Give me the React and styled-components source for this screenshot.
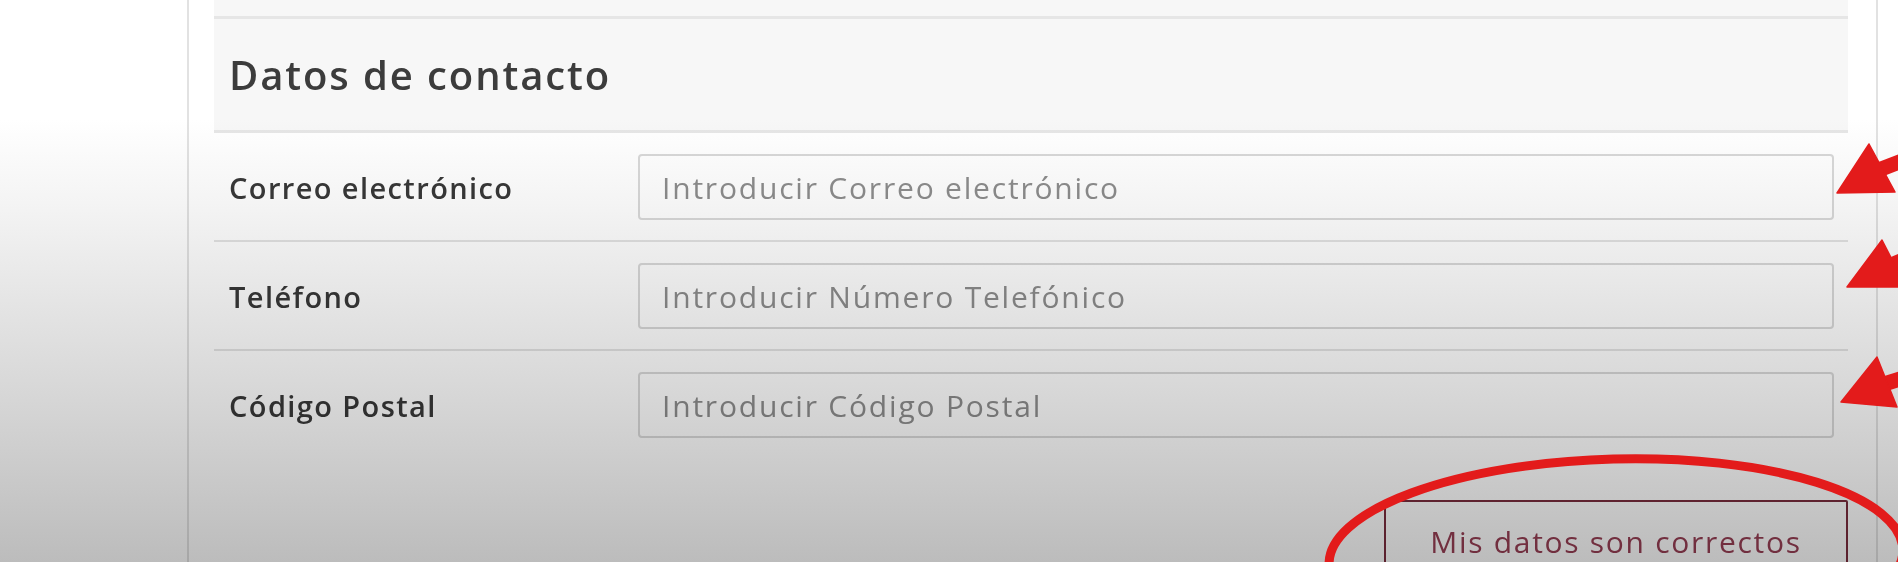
import React from "react";
import styled, { createGlobalStyle } from "styled-components";

const GlobalStyle = createGlobalStyle`
	html, body {
		margin: 0;
		padding: 0;
		background: #ffffff;
		overflow: hidden;
	}
	body {
		font-family: "Open Sans", "Noto Sans", "Liberation Sans", sans-serif;
	}
`;

const Page = styled.div`
	position: relative;
	width: 1898px;
	height: 562px;
	overflow: hidden;
	background: #ffffff;
`;

const Card = styled.div`
	margin-left: 187px;
	width: 1691px;
	height: 562px;
	box-sizing: border-box;
	border-left: 2px solid #e2e2e2;
	border-right: 2px solid #e2e2e2;
	padding: 0 28px 0 25px;
	background: #ffffff;
`;

const Section = styled.div`
	display: flex;
	flex-direction: column;
`;

const TopBand = styled.div`
	height: 16px;
	background: #f7f7f7;
	border-bottom: 3px solid #e6e6e6;
`;

const Header = styled.div`
	height: 111px;
	display: flex;
	align-items: center;
	padding-left: 15px;
	background: #f7f7f7;
	border-bottom: 3px solid #e6e6e6;
`;

const Title = styled.h2`
	margin: 0;
	font-size: 40px;
	font-weight: 600;
	letter-spacing: 1.9px;
	color: #3c3c3c;
`;

const Row = styled.div`
	display: grid;
	grid-template-columns: 424px 1fr;
	align-items: center;
	padding: 21px 14px 20px 0;
	border-bottom: ${(p) => (p.$last ? "none" : "2px solid #e4e4e4")};
`;

const Label = styled.label`
	padding-left: 15px;
	font-size: 29px;
	font-weight: 600;
	letter-spacing: 1.4px;
	color: #383838;
`;

const Input = styled.input`
	height: 66px;
	box-sizing: border-box;
	padding: 0 22px;
	border: 2px solid #d9d9d9;
	border-radius: 4px;
	background: #ffffff;
	font-family: "Open Sans", "Noto Sans", sans-serif;
	font-size: 30px;
	letter-spacing: 1.8px;
	color: #444;
	outline: none;

	&::placeholder {
		color: #8d8d8d;
	}
`;

const Actions = styled.div`
	display: flex;
	justify-content: flex-end;
	padding-top: 42px;
`;

const Button = styled.button`
	width: 464px;
	height: 82px;
	border: 2px solid #7a2c3d;
	border-radius: 2px;
	background: transparent;
	font-family: "Open Sans", "Noto Sans", sans-serif;
	font-size: 30px;
	letter-spacing: 1.7px;
	color: #983e54;
`;

const Vignette = styled.div`
	position: absolute;
	inset: 0;
	pointer-events: none;
	mix-blend-mode: multiply;
	background: linear-gradient(
		to bottom,
		#ffffff 0px,
		#ffffff 120px,
		#f3f3f3 210px,
		#e5e5e5 300px,
		#d6d6d6 400px,
		#bcbcbc 562px
	);
`;

const Marks = styled.svg`
	position: absolute;
	top: 0;
	left: 0;
	pointer-events: none;
`;

const fields = [
	{ label: "Correo electrónico", placeholder: "Introducir Correo electrónico" },
	{ label: "Teléfono", placeholder: "Introducir Número Telefónico" },
	{ label: "Código Postal", placeholder: "Introducir Código Postal" },
];

// tip, head corner a, head corner b, tail end
const arrows = [
	{ tip: [1837, 193], a: [1869, 144], b: [1895, 192], tail: [1930, 150] },
	{ tip: [1847, 287], a: [1882, 240], b: [1906, 287], tail: [1940, 244] },
	{ tip: [1841, 402], a: [1877, 357], b: [1897, 407], tail: [1940, 366] },
];

const Arrow = ({ tip, a, b, tail }) => {
	const mid = [(a[0] + b[0]) / 2, (a[1] + b[1]) / 2];
	return (
		<g fill="#e31b1b" stroke="#e31b1b">
			<line x1={mid[0] - 6} y1={mid[1] + 3} x2={tail[0]} y2={tail[1]} strokeWidth="15" />
			<polygon points={`${tip.join(",")} ${a.join(",")} ${b.join(",")}`} strokeWidth="1.5" strokeLinejoin="round" />
		</g>
	);
};

const App = () => {
	return (
		<Page>
			<GlobalStyle />
			<Card>
				<Section>
					<TopBand />
					<Header>
						<Title>Datos de contacto</Title>
					</Header>
					{fields.map((f, i) => (
						<Row key={f.label} $last={i === fields.length - 1}>
							<Label>{f.label}</Label>
							<Input placeholder={f.placeholder} />
						</Row>
					))}
					<Actions>
						<Button>Mis datos son correctos</Button>
					</Actions>
				</Section>
			</Card>
			<Vignette />
			<Marks width="1898" height="562" viewBox="0 0 1898 562">
				{arrows.map((a, i) => (
					<Arrow key={i} {...a} />
				))}
				<ellipse
					cx="1616"
					cy="557"
					rx="287"
					ry="98"
					fill="none"
					stroke="#e31b1b"
					strokeWidth="9"
					transform="rotate(-1.5 1616 557)"
				/>
			</Marks>
		</Page>
	);
};

export default App;
